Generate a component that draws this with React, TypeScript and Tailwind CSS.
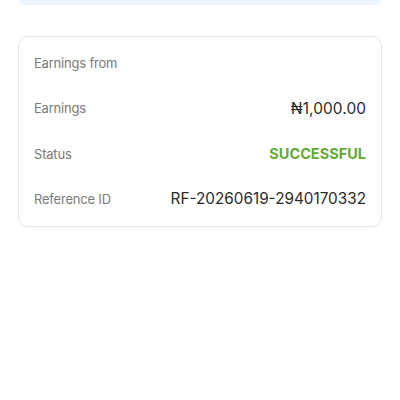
export default function App() {
  const rows = [
    { label: "Earnings from", value: "", cls: "" },
    { label: "Earnings", value: "₦1,000.00", cls: "text-[#2b2b2b] text-[15.4px] tracking-[0.1px]" },
    { label: "Status", value: "SUCCESSFUL", cls: "text-[#63a832] font-bold text-[14.5px]" },
    { label: "Reference ID", value: "RF-20260619-2940170332", cls: "text-[#2b2b2b] text-[15.3px]" },
  ];
  return (
    <div className="w-[400px] h-[400px] bg-white px-[18px]" style={{ fontFamily: "Inter, 'Noto Sans', sans-serif" }}>
      <div className="h-[5px] bg-[#ebf3fe] rounded-b-[10px] mx-[1px]" />
      <div className="mt-[31px] border border-[#e6e6e6] rounded-[10px] pl-[15px] pr-[15px] py-[3.5px]">
        {rows.map((r) => (
          <div key={r.label} className="flex items-center justify-between h-[45.5px]">
            <span className="text-[13px] tracking-[-0.2px] text-[#7a7a7a]">{r.label}</span>
            <span className={r.cls}>{r.value}</span>
          </div>
        ))}
      </div>
    </div>
  );
}
